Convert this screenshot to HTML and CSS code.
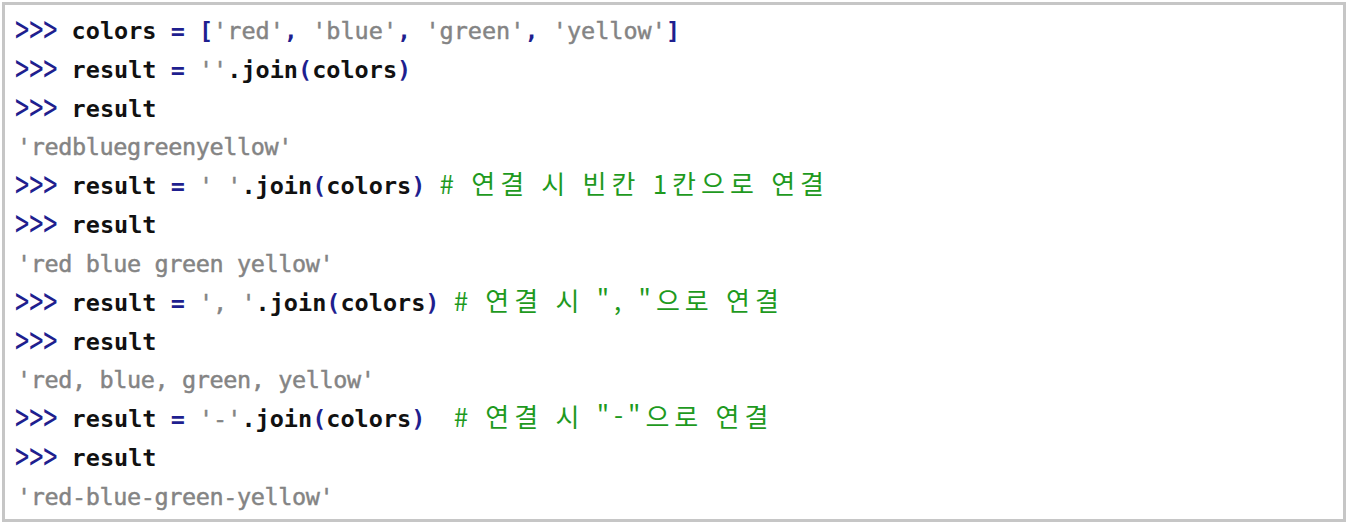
FILE: index.html
```html
<!DOCTYPE html>
<html lang="ko">
<head>
<meta charset="utf-8">
<title>join</title>
<link rel="stylesheet" href="styles.css">
</head>
<body>
<div class="box">
  <div class="line"><span class="p">&gt;&gt;&gt;</span> colors <span class="op">=</span> <span class="op">[</span><span class="s">'red'</span><span class="op">,</span> <span class="s">'blue'</span><span class="op">,</span> <span class="s">'green'</span><span class="op">,</span> <span class="s">'yellow'</span><span class="op">]</span></div>
  <div class="line"><span class="p">&gt;&gt;&gt;</span> result <span class="op">=</span> <span class="s">''</span>.join<span class="op">(</span>colors<span class="op">)</span></div>
  <div class="line"><span class="p">&gt;&gt;&gt;</span> result</div>
  <div class="line out">'redbluegreenyellow'</div>
  <div class="line"><span class="p">&gt;&gt;&gt;</span> result <span class="op">=</span> <span class="s">' '</span>.join<span class="op">(</span>colors<span class="op">)</span> <span class="c"># 연결 시 빈칸 1칸으로 연결</span></div>
  <div class="line"><span class="p">&gt;&gt;&gt;</span> result</div>
  <div class="line out">'red blue green yellow'</div>
  <div class="line"><span class="p">&gt;&gt;&gt;</span> result <span class="op">=</span> <span class="s">', '</span>.join<span class="op">(</span>colors<span class="op">)</span> <span class="c"># 연결 시 ", "으로 연결</span></div>
  <div class="line"><span class="p">&gt;&gt;&gt;</span> result</div>
  <div class="line out">'red, blue, green, yellow'</div>
  <div class="line"><span class="p">&gt;&gt;&gt;</span> result <span class="op">=</span> <span class="s">'-'</span>.join<span class="op">(</span>colors<span class="op">)</span>  <span class="c"># 연결 시 "-"으로 연결</span></div>
  <div class="line"><span class="p">&gt;&gt;&gt;</span> result</div>
  <div class="line out">'red-blue-green-yellow'</div>
</div>
</body>
</html>
```
FILE: styles.css
```css
html, body {
  margin: 0;
  padding: 0;
  background: #ffffff;
}

.box {
  margin: 2px;
  width: 1344px;
  height: 520px;
  box-sizing: border-box;
  border: 3px solid #c6c6c6;
  padding: 7px 0 0 10px;
  font-family: "DejaVu Sans Mono", "Liberation Mono", monospace;
  font-size: 23.5px;
  font-weight: bold;
  color: #111111;
}

.line {
  height: 38.83px;
  line-height: 38.83px;
  white-space: pre;
}

.p {
  display: inline-block;
  color: #1f1f8f;
  font-weight: normal;
  transform: scale(1, 1.5);
  transform-origin: 50% 58%;
}

.op {
  color: #1f1f8f;
}

.s {
  color: #848484;
  font-weight: normal;
  -webkit-text-stroke: 0.45px #848484;
}

.out {
  color: #848484;
  font-weight: normal;
  letter-spacing: -0.4px;
  padding-left: 2px;
  -webkit-text-stroke: 0.45px #848484;
}

.c {
  color: #1e9a1e;
  font-family: "Noto Sans CJK KR", "Noto Sans", sans-serif;
  font-weight: normal;
  font-size: 26px;
  line-height: 1;
  letter-spacing: 5px;
}
```
